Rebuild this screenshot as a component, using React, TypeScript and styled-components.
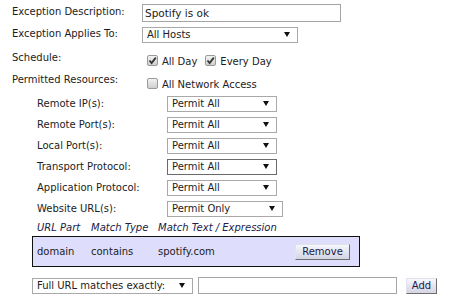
import React, { FC } from 'react';
import styled, { createGlobalStyle } from 'styled-components';

const GlobalStyle = createGlobalStyle`
  body {
    margin: 0;
    background: #fff;
    font-family: "DejaVu Sans", Verdana, sans-serif;
    font-size: 10px;
    color: #1c1c22;
  }
`;

const Page = styled.div`
  padding: 4px 0 0 12px;
  width: 455px;
  box-sizing: border-box;
`;

const FormRow = styled.div<{ $h: number; $indent?: number }>`
  display: grid;
  grid-template-columns: 130px 1fr;
  align-items: center;
  height: ${p => p.$h}px;
  padding-left: ${p => p.$indent || 0}px;
`;

const Label = styled.div<{ $lift?: number }>`
  line-height: 12px;
  white-space: nowrap;
  transform: translateY(${p => -(p.$lift || 0)}px);
`;

const TextBox = styled.div<{ $w: number; $h?: number }>`
  width: ${p => p.$w}px;
  height: ${p => p.$h || 18}px;
  box-sizing: border-box;
  border: 1px solid #a5a5a5;
  background: #fff;
  padding-left: 2px;
  display: flex;
  align-items: center;
  font-size: 10.5px;
`;

const SelectBox = styled.div<{ $w: number; $dark?: boolean }>`
  width: ${p => p.$w}px;
  height: 16px;
  box-sizing: border-box;
  border: 1px solid ${p => (p.$dark ? '#6a6a6a' : '#a9a9a9')};
  background: #fff;
  display: flex;
  align-items: center;
  justify-content: space-between;
  padding: 0 7px 0 4px;
  white-space: nowrap;
`;

const Checks = styled.div`
  display: flex;
  align-items: center;
  gap: 8px;
  padding: 5px 0 0 5px;
`;

const CheckItem = styled.label`
  display: flex;
  align-items: center;
  gap: 4px;
  line-height: 12px;
`;

const Box = styled.span`
  width: 11px;
  height: 11px;
  box-sizing: border-box;
  border: 1px solid #9a9a9a;
  border-radius: 2px;
  background: linear-gradient(#f2f2f2, #cfcfcf);
  display: inline-flex;
  align-items: center;
  justify-content: center;
  margin-top: -4px;
`;

const UrlHead = styled.div`
  display: grid;
  grid-template-columns: 54px 67px 1fr;
  height: 17px;
  align-items: end;
  padding: 0 0 2px 25px;
  box-sizing: border-box;
  font-style: italic;
  color: #20204a;
  line-height: 12px;
`;

const UrlBox = styled.div`
  margin-left: 20px;
  width: 328px;
  height: 31px;
  box-sizing: border-box;
  border: 1px solid #111;
  background: #dedefc;
  display: grid;
  grid-template-columns: 54px 67px 1fr auto;
  align-items: center;
  padding: 0 9px 0 4px;
`;

const Button = styled.button<{ $w: number }>`
  width: ${p => p.$w}px;
  height: 16px;
  padding: 0;
  font: inherit;
  color: #1a1a4a;
  border: 1px solid;
  border-color: #e2e2ea #6e6e6e #6e6e6e #e2e2ea;
  background: linear-gradient(#f6f6fc, #d4d4e4);
  line-height: 12px;
`;

const BottomRow = styled.div`
  display: flex;
  align-items: center;
  gap: 5px;
  margin: 10px 0 0 20px;
`;

const AddButton = styled(Button)`
  margin-left: 4px;
`;

const Arrow: FC = () => (
  <svg width="6" height="5" viewBox="0 0 6 5">
    <polygon points="0,0 6,0 3,5" fill="#111" />
  </svg>
);

const Check: FC<{ on?: boolean }> = ({ on }) => (
  <Box>
    {on && (
      <svg width="9" height="9" viewBox="0 0 9 9">
        <path d="M1.5 4.5 L3.6 7 L7.8 1.6" stroke="#333" strokeWidth="1.8" fill="none" />
      </svg>
    )}
  </Box>
);

const Select: FC<{ w: number; dark?: boolean; children: React.ReactNode }> = ({ w, dark, children }) => (
  <SelectBox $w={w} $dark={dark}>
    <span>{children}</span>
    <Arrow />
  </SelectBox>
);

const resources = [
  { label: 'Remote IP(s):', value: 'Permit All' },
  { label: 'Remote Port(s):', value: 'Permit All' },
  { label: 'Local Port(s):', value: 'Permit All' },
  { label: 'Transport Protocol:', value: 'Permit All', dark: true },
  { label: 'Application Protocol:', value: 'Permit All' },
  { label: 'Website URL(s):', value: 'Permit Only', wide: true },
];

const App: FC = () => (
  <>
    <GlobalStyle />
    <Page>
      <FormRow $h={18}>
        <Label $lift={1}>Exception Description:</Label>
        <TextBox $w={199}>Spotify is ok</TextBox>
      </FormRow>
      <FormRow $h={25}>
        <Label $lift={1}>Exception Applies To:</Label>
        <Select w={156}>All Hosts</Select>
      </FormRow>
      <FormRow $h={25}>
        <Label $lift={2}>Schedule:</Label>
        <Checks>
          <CheckItem><Check on />All Day</CheckItem>
          <CheckItem><Check on />Every Day</CheckItem>
        </Checks>
      </FormRow>
      <FormRow $h={21}>
        <Label $lift={3}>Permitted Resources:</Label>
        <Checks>
          <CheckItem><Check />All Network Access</CheckItem>
        </Checks>
      </FormRow>
      {resources.map(r => (
        <FormRow key={r.label} $h={21} $indent={25}>
          <Label>{r.label}</Label>
          <Select w={r.wide ? 116 : 110} dark={r.dark}>{r.value}</Select>
        </FormRow>
      ))}
      <UrlHead>
        <span>URL Part</span>
        <span>Match Type</span>
        <span>Match Text / Expression</span>
      </UrlHead>
      <UrlBox>
        <span>domain</span>
        <span>contains</span>
        <span>spotify.com</span>
        <Button $w={55}>Remove</Button>
      </UrlBox>
      <BottomRow>
        <Select w={161}>Full URL matches exactly:</Select>
        <TextBox $w={199} $h={17} />
        <AddButton $w={31}>Add</AddButton>
      </BottomRow>
    </Page>
  </>
);

export default App;
